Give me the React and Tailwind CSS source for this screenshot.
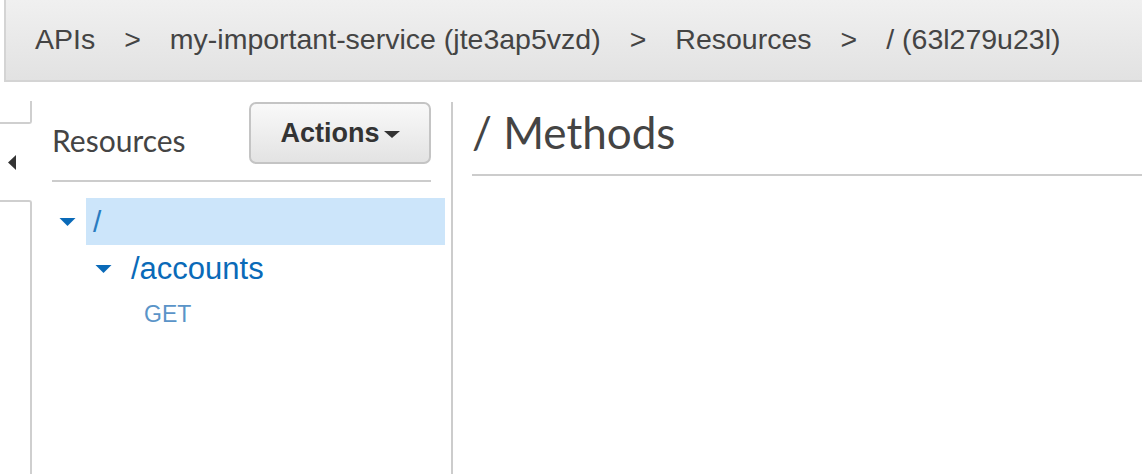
import React from "react";

function Caret({ className }) {
  return (
    <svg className={className} viewBox="0 0 16 8" width="17" height="8">
      <polygon points="0,0 16,0 8,8" fill="currentColor" />
    </svg>
  );
}

export default function App() {
  const crumbs = ["APIs", "my-important-service (jte3ap5vzd)", "Resources", "/ (63l279u23l)"];
  return (
    <div className="w-[1142px] h-[474px] overflow-hidden bg-white flex flex-col">
      <div
        className="h-[82px] shrink-0 ml-[4px] border-l-2 border-b-2 border-[#d4d4d4] bg-gradient-to-b from-[#f0f0f0] to-[#e2e2e2] flex items-center pl-[29px] pb-[1px] text-[28.5px] text-[#444] font-['Liberation_Sans',Arial,sans-serif]"
      >
        {crumbs.map((c, i) => (
          <React.Fragment key={i}>
            {i > 0 && <span className="px-[29px]">&gt;</span>}
            <span>{c}</span>
          </React.Fragment>
        ))}
      </div>
      <div className="flex flex-1 min-h-0">
        <div className="w-[32px] shrink-0 flex flex-col">
          <div className="mt-[19px] h-[23px] border-r-2 border-b-2 border-[#cfcfcf] rounded-br-[3px]" />
          <div className="h-[76px] flex items-center pl-[8px]">
            <svg viewBox="0 0 8 15" width="8" height="15" className="text-[#333]">
              <polygon points="8,0 8,15 0,7.5" fill="currentColor" />
            </svg>
          </div>
          <div className="flex-1 border-r-2 border-t-2 border-[#cfcfcf] rounded-tr-[3px]" />
        </div>
        <div className="w-[421px] shrink-0 mt-[20px] border-r-2 border-[#cccccc] flex flex-col">
          <div className="mx-[20px] flex justify-between items-start border-b-2 border-[#cccccc] h-[80px]">
            <div className="mt-[18px] text-[30px] leading-[40px] text-[#444] font-['Lato',sans-serif]">Resources</div>
            <button className="w-[182px] h-[62px] rounded-[7px] border-2 border-[#c4c4c4] bg-gradient-to-b from-[#f9f9f9] to-[#e3e3e3] flex items-center justify-center gap-[4px] text-[27px] font-bold text-[#333] font-['Liberation_Sans',Arial,sans-serif]">
              <span>Actions</span>
              <svg viewBox="0 0 16 7" width="16" height="7" className="mt-[2px]">
                <polygon points="0,0 16,0 8,7" fill="currentColor" />
              </svg>
            </button>
          </div>
          <div className="mt-[16px] font-['Liberation_Sans',Arial,sans-serif]">
            <div className="flex items-center h-[47px]">
              <div className="w-[54px] flex justify-end pr-[10px]">
                <Caret className="text-[#0a6ab8]" />
              </div>
              <div className="flex-1 h-full bg-[#cce5fa] mr-[6px] flex items-center pl-[7px] text-[30px] text-[#2a7cc0]">
                /
              </div>
            </div>
            <div className="flex items-center h-[48px]">
              <div className="w-[80px] shrink-0 flex justify-end">
                <Caret className="text-[#0a6ab8]" />
              </div>
              <div className="pl-[19px] text-[31px] text-[#0a6ab8]">/accounts</div>
            </div>
            <div className="pl-[112px] text-[23px] text-[#5a94c8] leading-[28px] mt-[7px]">GET</div>
          </div>
        </div>
        <div className="flex-1 pl-[19px] pt-[22px]">
          <div className="h-[72px] border-b-2 border-[#cccccc] text-[44px] leading-[56px] text-[#444] font-['Lato',sans-serif]">
            / Methods
          </div>
        </div>
      </div>
    </div>
  );
}
